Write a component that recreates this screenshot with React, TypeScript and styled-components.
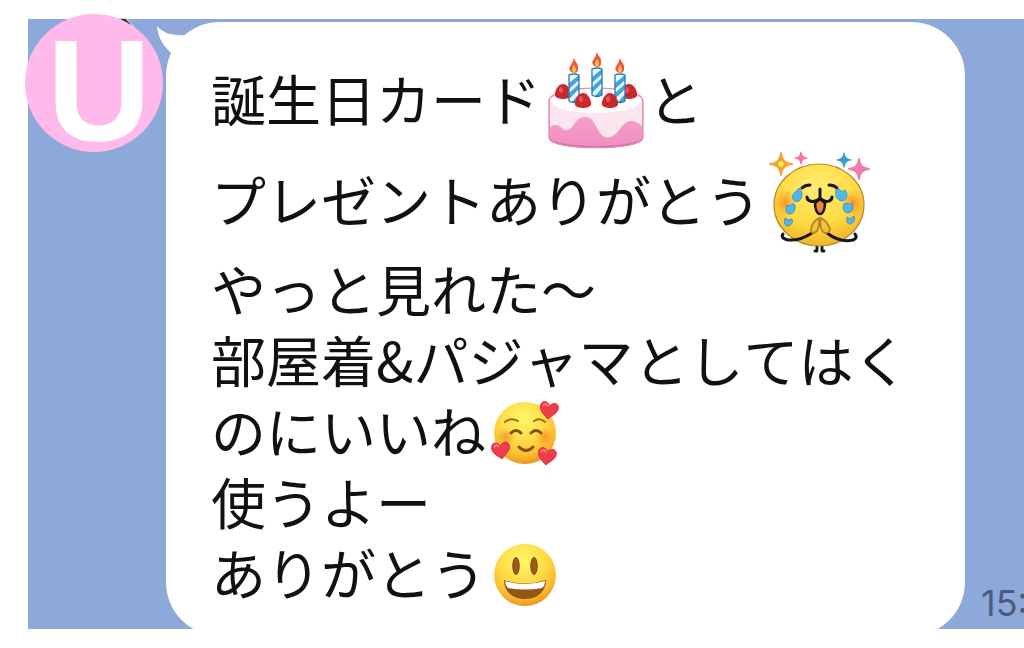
import React from "react";
import styled, { createGlobalStyle } from "styled-components";

const GlobalStyle = createGlobalStyle`
  * { box-sizing: border-box; }
  body { margin: 0; background: #fff; overflow-x: hidden; }
`;

const Page = styled.main`
  position: relative;
  padding: 19px 0 19px 28px;
  font-family: "Noto Sans CJK JP", sans-serif;
`;

const ChatPanel = styled.section`
  display: flex;
  align-items: flex-end;
  padding: 3px 0 0 138px;
  background: #8ca9d9;
  overflow: hidden;
`;

const Bubble = styled.article`
  position: relative;
  flex: 1;
  min-width: 0;
  margin-bottom: -7px;
  padding: 28px 0 26px 45px;
  border-radius: 54px;
  background: #fff;
`;

const Tail = styled.svg`
  position: absolute;
  left: -10px;
  top: 3px;
`;

const Line = styled.p<{ $tall?: boolean }>`
  display: flex;
  align-items: center;
  height: ${(p) => (p.$tall ? 101 : 71)}px;
  margin: 0;
  color: #111;
  font-size: 55px;
  font-weight: 400;
  font-kerning: none;
  line-height: 63px;
  white-space: nowrap;
`;

const Words = styled.span`
  padding-bottom: 6px;
`;

const Greeting = styled.div`
  padding-bottom: 3px;
`;

const Emoji = styled.svg<{ $size: number; $gap?: number }>`
  flex: none;
  width: ${(p) => p.$size}px;
  height: ${(p) => p.$size}px;
  margin-left: ${(p) => p.$gap ?? 5}px;
`;

const Time = styled.time`
  flex: none;
  width: 59px;
  padding: 0 0 6px 16px;
  color: #4b5b80;
  font-family: Inter, sans-serif;
  font-size: 36px;
  line-height: 40px;
  white-space: nowrap;
`;

const Avatar = styled.div`
  position: absolute;
  left: 25px;
  top: 14px;
  display: flex;
  justify-content: center;
  width: 138px;
  height: 138px;
  padding-left: 10px;
  border-radius: 50%;
  background: #ffb9eb;
  color: #fff;
  font-family: "Liberation Sans", sans-serif;
  font-size: 144px;
  font-weight: 700;
  line-height: 156px;
`;

const PhotoEdge = styled.svg`
  position: absolute;
  left: 116px;
  top: 18px;
`;

function Candle({ x, y }: { x: number; y: number }) {
  return (
    <g transform={`translate(${x} ${y})`}>
      <path d="M5-1C0-2-1-6 2-9C3-11 4-13 5-16C6-12 10-10 9-5C9-2 7-1 5-1Z" fill="#e95a3c" />
      <path d="M5-1C2-3 3-6 5-9C7-6 8-3 5-1Z" fill="#ffc34d" />
      <path d="M0 1Q5-1 10 1V27Q5 30 0 27Z" fill="#edf9ff" />
      <path d="M0 9L10 1V6L0 15ZM0 19L10 10V15L0 25ZM3 28L10 20V27Q6 29 3 28Z" fill="#3ea5df" />
      <path d="M0 1Q5-1 10 1V27Q5 30 0 27Z" fill="none" stroke="#2b78af" strokeWidth="1.3" />
    </g>
  );
}

function Berry({ x, y }: { x: number; y: number }) {
  return (
    <g transform={`translate(${x} ${y})`}>
      <path d="M0-8C5-8 9 0 8 4C6 8-6 8-8 4C-9 0-5-8 0-8Z" fill="#c9282f" />
      <ellipse cx="-2" cy="-2" rx="2" ry="3" fill="#e85453" />
    </g>
  );
}

function Cake() {
  return (
    <Emoji $size={102} viewBox="0 0 102 102" role="img" aria-label="誕生日ケーキ">
      <defs>
        <linearGradient id="sponge" x1="0" y1="0" x2="0" y2="1">
          <stop offset="0" stopColor="#ffabd3" />
          <stop offset="1" stopColor="#ef8fc1" />
        </linearGradient>
      </defs>
      <path d="M3 50C6 34 94 34 97 50V88C94 101 6 101 3 88Z" fill="url(#sponge)" />
      <path d="M4 89C18 98 82 98 96 89C92 101 8 101 4 89Z" fill="#dc74ad" />
      <path d="M4 50C7 35 93 35 96 50V76C88 70 83 69 76 76C68 89 59 92 52 80C46 68 44 67 38 67C30 67 28 78 22 80C16 81 15 74 8 75L4 77Z" fill="#fbe6f0" />
      <ellipse cx="50" cy="51" rx="45" ry="12" fill="#fffdfe" />
      <path d="M3 50C6 34 94 34 97 50V88C94 101 6 101 3 88Z" fill="none" stroke="#dc89b2" strokeWidth="1.2" />
      <Berry x={17} y={42} /><Berry x={83} y={42} />
      <Candle x={23} y={24} /><Candle x={46} y={18} /><Candle x={69} y={24} />
      <Berry x={37} y={51} /><Berry x={64} y={51} />
    </Emoji>
  );
}

function Sparkle({ x, y, r, color, core }: { x: number; y: number; r: number; color: string; core?: string }) {
  return (
    <g transform={`translate(${x} ${y}) scale(${r})`}>
      <path d="M0-1C.12-.3.3-.12 1 0C.3.12.12.3 0 1C-.12.3-.3.12-1 0C-.3-.12-.12-.3 0-1Z" fill={color} stroke={color} strokeWidth=".18" strokeLinejoin="round" />
      {core && <circle r=".24" fill={core} />}
    </g>
  );
}

function TearyFace() {
  return (
    <Emoji $size={102} $gap={8} viewBox="0 0 102 102" role="img" aria-label="うれし泣き">
      <defs>
        <radialGradient id="teary" cx="48%" cy="30%" r="68%">
          <stop stopColor="#ffed72" />
          <stop offset=".65" stopColor="#ffda42" />
          <stop offset="1" stopColor="#efb82a" />
        </radialGradient>
        <radialGradient id="blush">
          <stop stopColor="#f58a25" stopOpacity=".9" />
          <stop offset="1" stopColor="#f9a028" stopOpacity="0" />
        </radialGradient>
      </defs>
      <path d="M48 95V100M53 95V100M46 100H48M53 100H55" stroke="#171717" strokeWidth="2.8" strokeLinecap="round" />
      <ellipse cx="50" cy="54" rx="45" ry="41" fill="url(#teary)" stroke="#b98b2f" strokeWidth="1.2" />
      <ellipse cx="16" cy="52" rx="12" ry="14" fill="url(#blush)" />
      <ellipse cx="84" cy="52" rx="12" ry="14" fill="url(#blush)" />
      <path d="M33 37Q36 34 41 34M60 34Q65 34 68 37" fill="none" stroke="#171717" strokeWidth="3" strokeLinecap="round" />
      <path d="M46 52L51 48L56 52C56 58 54 63 51 63C48 63 46 58 46 52Z" fill="#ec873e" stroke="#171717" strokeWidth="2.5" />
      <path d="M51 38V47Q46 52 41 50Q38 49 38 46M51 47Q56 52 60 50Q63 49 63 46" fill="none" stroke="#171717" strokeWidth="3" strokeLinecap="round" />
      <g fill="#4eb8ee" stroke="#318bc2" strokeWidth=".8">
        <path d="M30 37C34 40 34 47 30 50C26 52 22 48 24 44C25 41 28 40 30 37ZM67 39C66 44 67 49 73 50C79 49 79 43 76 39Q73 42 71 39Q69 37 67 39Z" />
        <path d="M18 54Q15 63 21 63Q27 62 26 54Q23 51 21 55ZM75 53Q72 61 79 62Q86 60 83 52Q80 55 78 52Z" />
        <path d="M16 67Q14 75 19 75Q25 73 23 68L19 69ZM78 66Q77 73 81 73Q87 71 85 65L81 68Z" />
      </g>
      <path d="M43 82Q31 90 19 89Q11 87 14 83M58 82Q71 92 84 89Q89 87 86 83" fill="none" stroke="#171717" strokeWidth="3" strokeLinecap="round" />
      <path d="M50 67Q43 71 42 78Q42 85 48 80Q51 74 50 67ZM52 67Q59 71 61 78Q60 84 54 81Q50 75 52 67Z" fill="#efc43c" stroke="#b98024" strokeWidth="1.8" />
      <Sparkle x={12} y={13} r={11} color="#f5a33c" core="#fff34f" />
      <Sparkle x={32} y={7} r={6} color="#ef75a4" />
      <Sparkle x={75} y={9} r={7} color="#359fce" />
      <Sparkle x={90} y={18} r={10} color="#f17cac" />
    </Emoji>
  );
}

function FaceFill({ id }: { id: string }) {
  return (
    <>
      <defs>
        <radialGradient id={id} cx="46%" cy="27%" r="72%">
          <stop stopColor="#fff66c" />
          <stop offset=".5" stopColor="#ffdc46" />
          <stop offset=".82" stopColor="#fbbd31" />
          <stop offset="1" stopColor="#ec9826" />
        </radialGradient>
      </defs>
      <circle cx="34" cy="34" r="31" fill={`url(#${id})`} />
    </>
  );
}

function Heart({ x, y, angle }: { x: number; y: number; angle: number }) {
  return (
    <g transform={`translate(${x} ${y}) rotate(${angle})`}>
      <path d="M0 9C-5 5-10 1-9-4C-8-9-2-9 0-4C3-9 9-8 9-3C9 2 4 5 0 9Z" fill="#ed3c4a" stroke="#d52c3b" strokeWidth=".8" />
      <path d="M-6-4Q-4-7-2-4" fill="none" stroke="#ff7a7d" strokeWidth="2" strokeLinecap="round" />
    </g>
  );
}

function LovingFace() {
  return (
    <Emoji $size={68} viewBox="0 0 68 68" role="img" aria-label="ハートの笑顔">
      <FaceFill id="loving" />
      <defs>
        <radialGradient id="warm">
          <stop stopColor="#f27b24" stopOpacity=".65" />
          <stop offset="1" stopColor="#f6922a" stopOpacity="0" />
        </radialGradient>
      </defs>
      <circle cx="15" cy="38" r="10" fill="url(#warm)" />
      <circle cx="54" cy="38" r="10" fill="url(#warm)" />
      <g fill="none" strokeLinecap="round">
        <path d="M14 23Q20 18 27 22M43 22Q49 18 54 23" stroke="#a46c16" strokeWidth="2" />
        <path d="M20 34Q25 29 30 34M40 34Q45 29 50 34" stroke="#865211" strokeWidth="3" />
        <path d="M28 48Q35 55 42 48" stroke="#865211" strokeWidth="3" />
      </g>
      <Heart x={58} y={11} angle={8} /><Heart x={10} y={51} angle={-8} /><Heart x={56} y={57} angle={8} />
    </Emoji>
  );
}

function SmilingFace() {
  return (
    <Emoji $size={68} viewBox="0 0 68 68" role="img" aria-label="笑顔">
      <FaceFill id="smiling" />
      <g fill="#985e16" stroke="#7c470b">
        <ellipse cx="25" cy="25" rx="3.2" ry="8.5" />
        <ellipse cx="43" cy="25" rx="3.2" ry="8.5" />
      </g>
      <path d="M13 39Q34 46 55 39C55 51 46 58 34 58C22 58 13 51 13 39Z" fill="#925612" />
      <path d="M14 40Q34 46 54 40Q54 45 51 47Q34 50 17 47Q14 44 14 40Z" fill="#fff" />
    </Emoji>
  );
}

export default function App() {
  return (
    <Page>
      <GlobalStyle />
      <ChatPanel>
        <Bubble>
          <Tail width="36" height="36" viewBox="0 0 36 36" aria-hidden="true">
            <path d="M1 1C7 8 16 11 30 10L30 30L15 28C6 19 2 12 1 1Z" fill="#fff" />
          </Tail>
          <Greeting>
            <Line $tall><Words>誕生日カード</Words><Cake /><Words>と</Words></Line>
            <Line $tall><Words>プレゼントありがとう</Words><TearyFace /></Line>
          </Greeting>
          <Line><Words>やっと見れた〜</Words></Line>
          <Line><Words>部屋着&amp;パジャマとしてはく</Words></Line>
          <Line><Words>のにいいね</Words><LovingFace /></Line>
          <Line><Words>使うよー</Words></Line>
          <Line><Words>ありがとう</Words><SmilingFace /></Line>
        </Bubble>
        <Time>15:</Time>
      </ChatPanel>
      <PhotoEdge width="20" height="14" viewBox="0 0 20 14" aria-hidden="true">
        <path d="M2 1H10L18 10" fill="none" stroke="#d5cfc4" strokeWidth="2" />
        <path d="M5 2H9L14 7" fill="none" stroke="#30282a" strokeWidth="2" />
      </PhotoEdge>
      <Avatar>U</Avatar>
    </Page>
  );
}
